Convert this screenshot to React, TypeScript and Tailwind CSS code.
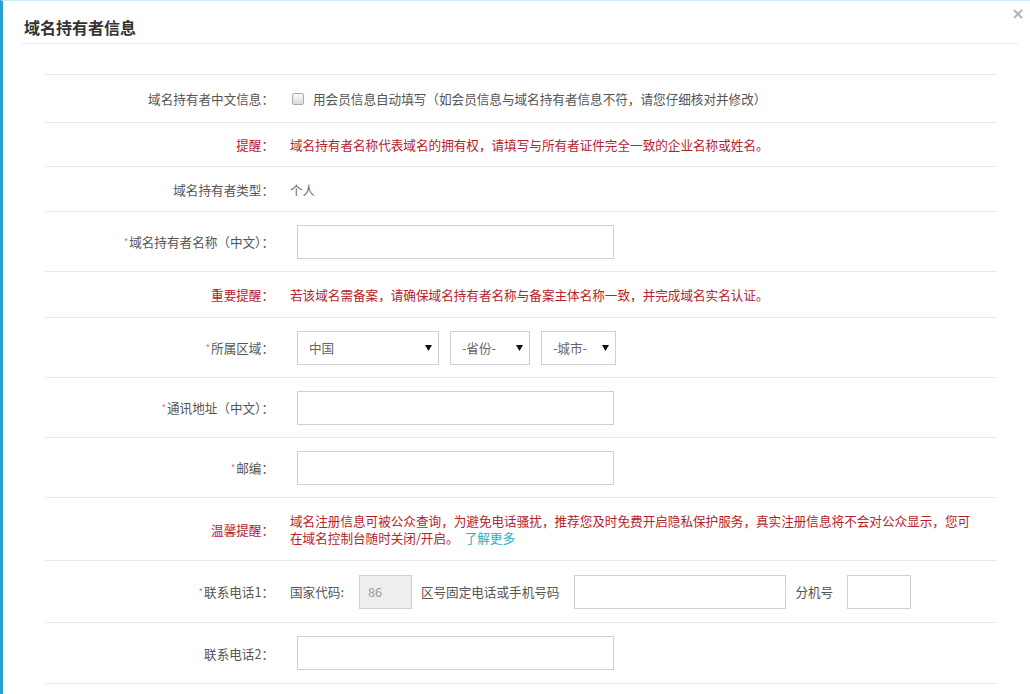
import type { ReactNode } from 'react';

const font = { fontFamily: '"Noto Sans CJK SC", "Noto Sans", sans-serif' };

function Label({ children, required, red }: { children: ReactNode; required?: boolean; red?: boolean }) {
  return (
    <div className={`w-[229px] shrink-0 text-right ${red ? 'text-[#b5222c]' : 'text-[#555]'}`}>
      {required && <span className="mr-px align-top text-[9px] text-[#e0666b]">*</span>}
      {children}
    </div>
  );
}

function Row({ h, label, required, red, children }: { h: string; label: string; required?: boolean; red?: boolean; children: ReactNode }) {
  return (
    <div className={`flex items-center border-b border-[#e8e8e8] ${h}`}>
      <Label required={required} red={red}>
        {label}
      </Label>
      <div className="flex flex-1 items-center pl-[16px]">{children}</div>
    </div>
  );
}

function TextBox({ w = 'w-[317px]' }: { w?: string }) {
  return <div className={`ml-[7px] h-[34px] border border-[#d0d0d0] bg-white ${w}`} />;
}

function Select({ text, w }: { text: string; w: string }) {
  return (
    <div className={`flex h-[34px] items-center justify-between border border-[#d0d0d0] bg-white pl-[11px] pr-[6px] text-[#666] ${w}`}>
      <span>{text}</span>
      <svg width="7" height="6" viewBox="0 0 7 6">
        <path d="M0 0H7L3.5 6Z" fill="#111" />
      </svg>
    </div>
  );
}

export default function App() {
  return (
    <div
      className="relative h-[694px] w-[1030px] overflow-hidden border-l-[3px] border-t border-[#2aa0d2] border-t-[#c8ecf8] bg-white text-[12.6px] leading-[17px]"
      style={font}
    >
      <svg className="absolute right-[7px] top-[8px]" width="10" height="10" viewBox="0 0 10 10">
        <path d="M1 1L9 9M9 1L1 9" stroke="#b5b5b5" strokeWidth="2" />
      </svg>

      <div className="ml-[19px] w-[996px] border-b border-[#ececec] pb-[6px] pl-[2px] pt-[16px] text-[16px] font-bold leading-[20px] text-[#333]">
        域名持有者信息
      </div>

      <div className="ml-[42px] mt-[30px] w-[952px] border-t border-[#e8e8e8]">
        <Row h="h-[48px]" label="域名持有者中文信息：">
          <span className="mr-[9px] ml-[2px] h-[12px] w-[12px] rounded-[2px] border border-[#a9a9a9] bg-gradient-to-b from-[#fafafa] to-[#dcdcdc]" />
          <span className="text-[#555]">用会员信息自动填写（如会员信息与域名持有者信息不符，请您仔细核对并修改）</span>
        </Row>

        <Row h="h-[44px]" label="提醒：" red>
          <span className="text-[#b5222c]">域名持有者名称代表域名的拥有权，请填写与所有者证件完全一致的企业名称或姓名。</span>
        </Row>

        <Row h="h-[45px]" label="域名持有者类型：">
          <span className="text-[#666]">个人</span>
        </Row>

        <Row h="h-[60px]" label="域名持有者名称（中文）：" required>
          <TextBox />
        </Row>

        <Row h="h-[46px]" label="重要提醒：" red>
          <span className="text-[#b5222c]">若该域名需备案，请确保域名持有者名称与备案主体名称一致，并完成域名实名认证。</span>
        </Row>

        <Row h="h-[60px]" label="所属区域：" required>
          <div className="ml-[7px] flex gap-[11px]">
            <Select text="中国" w="w-[142px]" />
            <Select text="-省份-" w="w-[80px]" />
            <Select text="-城市-" w="w-[75px]" />
          </div>
        </Row>

        <Row h="h-[60px]" label="通讯地址（中文）：" required>
          <TextBox />
        </Row>

        <Row h="h-[60px]" label="邮编：" required>
          <TextBox />
        </Row>

        <Row h="h-[63px]" label="温馨提醒：" red>
          <p className="text-[#b5222c]">
            域名注册信息可被公众查询，为避免电话骚扰，推荐您及时免费开启隐私保护服务，真实注册信息将不会对公众显示，您可
            <br />
            在域名控制台随时关闭/开启。
            <span className="ml-[6px] text-[#2ab1c0]">了解更多</span>
          </p>
        </Row>

        <Row h="h-[62px]" label="联系电话1：" required>
          <span className="text-[#555]">国家代码:</span>
          <div className="ml-[15px] flex h-[34px] w-[53px] items-center border border-[#d0d0d0] bg-[#eeeeee] pl-[8px] text-[#999]">
            86
          </div>
          <span className="ml-[9px] text-[#555]">区号固定电话或手机号码</span>
          <div className="ml-[15px] h-[34px] w-[212px] border border-[#d0d0d0]" />
          <span className="ml-[9px] text-[#555]">分机号</span>
          <div className="ml-[14px] h-[34px] w-[64px] border border-[#d0d0d0]" />
        </Row>

        <Row h="h-[61px]" label="联系电话2：">
          <TextBox />
        </Row>
      </div>
    </div>
  );
}
